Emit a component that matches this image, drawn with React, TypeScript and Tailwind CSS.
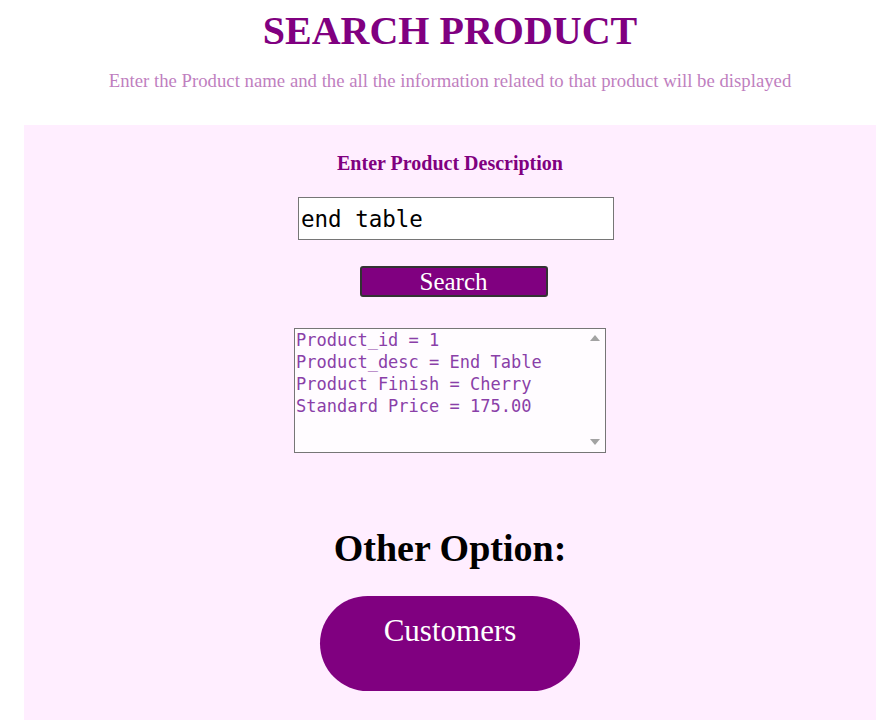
export default function App() {
  const result = [
    "Product_id = 1",
    "Product_desc = End Table",
    "Product Finish = Cherry",
    "Standard Price = 175.00",
  ].join("\n");

  return (
    <div className="min-h-screen bg-white pl-[24px] pr-[8px] font-['Liberation_Serif',serif]">
      <div className="flex flex-col items-center">
        <h1 className="mt-[8px] text-[40px] font-bold leading-[46px] text-[#800080]">SEARCH PRODUCT</h1>
        <p className="mt-[16px] text-[18.75px] leading-[22px] text-[#bf7fbf]">
          Enter the Product name and the all the information related to that product will be displayed
        </p>
      </div>

      <div className="mt-[33px] flex h-[595px] flex-col items-center bg-[#ffeeff] pt-[26px]">
        <label className="text-[20px] font-bold leading-[24px] text-[#800080]">Enter Product Description</label>
        <input
          defaultValue="end table"
          className="ml-[12px] mt-[22px] h-[43px] w-[316px] border border-[#767676] bg-white px-[2px] font-['DejaVu_Sans_Mono',monospace] text-[22.5px] text-black outline-none"
        />
        <button className="ml-[7px] mt-[26px] h-[31px] w-[188px] rounded-[3px] border-2 border-[#333] bg-[#800080] text-[25px] leading-[26px] text-white">
          Search
        </button>
        <div className="relative mt-[31px] h-[125px] w-[312px]">
          <textarea
            readOnly
            defaultValue={result}
            className="h-full w-full resize-none overflow-hidden border border-[#767676] bg-[#fffcff] py-0 pl-[1px] pr-[18px] font-['DejaVu_Sans_Mono',monospace] text-[17px] leading-[22px] text-[#8a3fa8] outline-none"
          />
          <svg className="absolute right-[6px] top-[7px]" width="10" height="6" viewBox="0 0 10 6">
            <path d="M0 6 L5 0 L10 6 Z" fill="#a3a3a3" />
          </svg>
          <svg className="absolute bottom-[8px] right-[6px]" width="10" height="6" viewBox="0 0 10 6">
            <path d="M0 0 L5 6 L10 0 Z" fill="#a3a3a3" />
          </svg>
        </div>
        <h2 className="mt-[73px] text-[38px] font-bold leading-[44px] text-black">Other Option:</h2>
        <button className="mt-[26px] h-[95px] w-[260px] rounded-full bg-[#800080] pb-[24px] text-[31px] text-white">
          Customers
        </button>
      </div>
    </div>
  );
}
